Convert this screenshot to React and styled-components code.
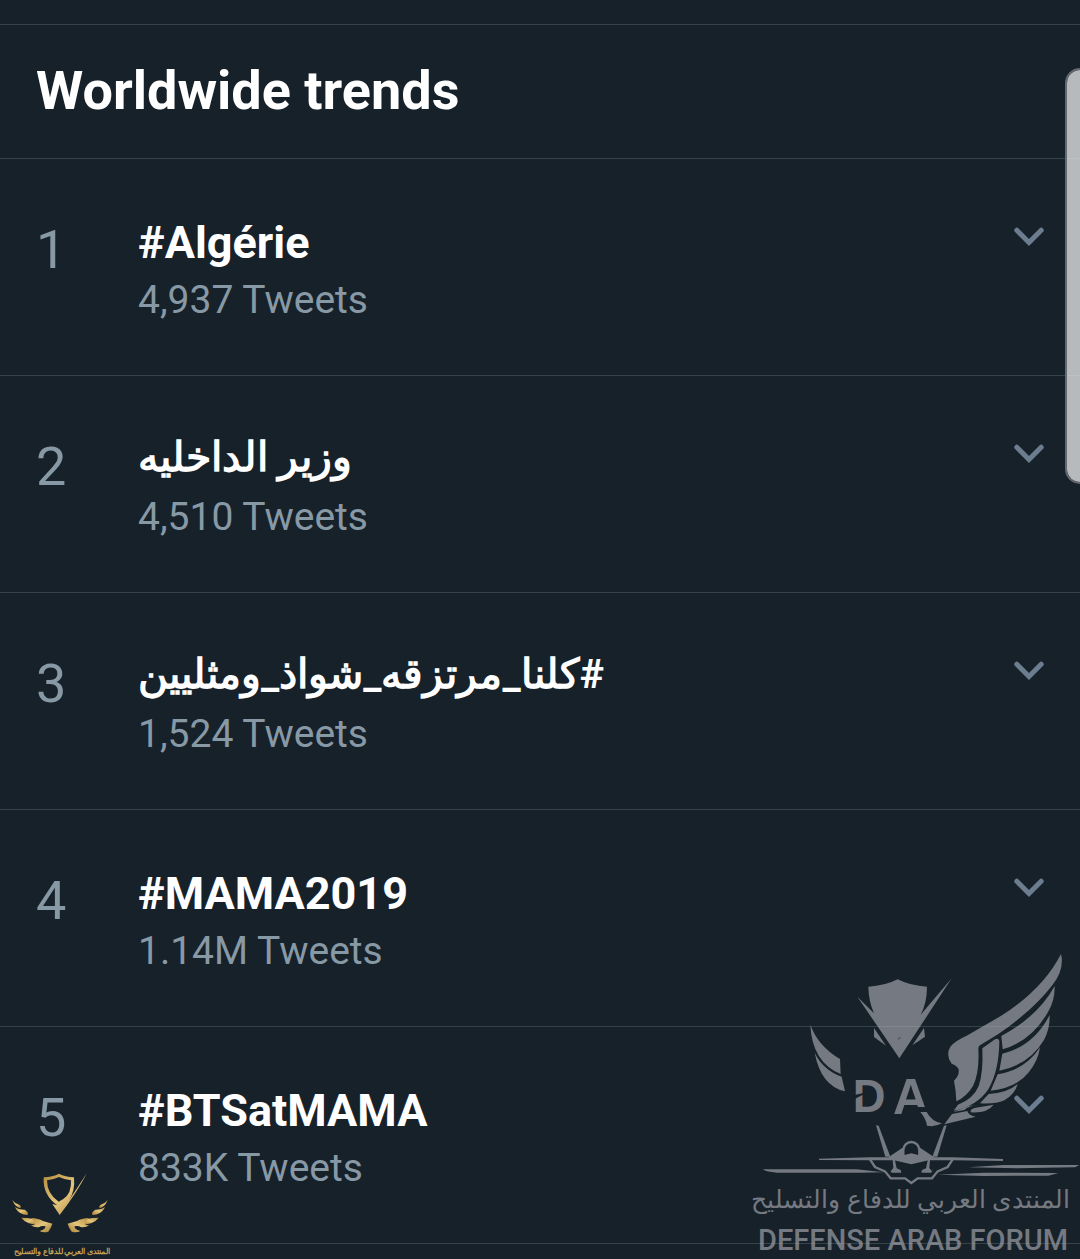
// App.jsx
import React from "react";
import styled, { createGlobalStyle } from "styled-components";

const GlobalStyle = createGlobalStyle`
    * {
        box-sizing: border-box;
    }
    body {
        margin: 0;
        background: #17212a;
        font-family: Roboto, sans-serif;
    }
`;

const Page = styled.main`
    position: relative;
    min-height: 100vh;
    padding-top: 24px;
    overflow: hidden;
    background: #17212a;
`;

const Header = styled.header`
    padding: 34px 36px 35px;
    border-top: 1px solid #34424a;
    border-bottom: 1px solid #34424a;
`;

const Heading = styled.h1`
    margin: 0;
    color: white;
    font-size: 54px;
    font-weight: 700;
    line-height: 64px;
`;

const TrendList = styled.ol`
    margin: 0;
    padding: 0;
    list-style: none;
`;

const TrendRow = styled.li`
    display: grid;
    grid-template-columns: 102px 1fr auto;
    align-items: start;
    padding: 56px 36px 51px;
    border-bottom: 1px solid #34424a;
`;

const Rank = styled.span`
    padding-top: 3px;
    color: #8899a6;
    font-size: 54px;
    line-height: 64px;
`;

const TrendBody = styled.div`
    display: flex;
    flex-direction: column;
    gap: 5px;
    min-width: 0;
`;

const TrendName = styled.h2`
    margin: 0;
    min-height: 56px;
    color: white;
    font-size: ${({ $arabic }) => ($arabic ? "41px" : "45px")};
    font-weight: 700;
    line-height: ${({ $arabic }) => ($arabic ? "50px" : "56px")};
    text-align: left;
`;

const TweetCount = styled.p`
    margin: 0;
    color: #8899a6;
    font-size: 39px;
    line-height: 48px;
`;

const MenuButton = styled.button`
    display: flex;
    margin: 12px 0 0;
    padding: 0;
    border: 0;
    background: transparent;
    color: #6b7d8e;
    cursor: pointer;
`;

const ScrollThumb = styled.div`
    position: absolute;
    top: 68px;
    right: 0;
    width: 15px;
    height: 416px;
    border: 2px solid #64696f;
    border-right: 0;
    border-radius: 15px 0 0 15px;
    background: rgba(222, 225, 226, 0.8);
    background-clip: padding-box;
`;

const ForumMark = styled.div`
    position: absolute;
    right: 0;
    bottom: 0;
    width: 330px;
    padding-bottom: 2px;
    color: #b4b4bb;
    opacity: 0.6;
    pointer-events: none;
`;

const ForumArabic = styled.p`
    margin: 0 0 8px;
    padding-right: 10px;
    font-size: 25px;
    line-height: 30px;
    white-space: nowrap;
`;

const ForumName = styled.p`
    margin: 0;
    padding-left: 8px;
    font-size: 29px;
    font-weight: 500;
    line-height: 34px;
    white-space: nowrap;
`;

const CornerMark = styled.div`
    position: absolute;
    left: 0;
    bottom: 0;
    width: 124px;
    pointer-events: none;
`;

const CornerText = styled.p`
    margin: 0;
    color: #c3a055;
    font-size: 8px;
    font-weight: 700;
    line-height: 14px;
    text-align: center;
    white-space: nowrap;
`;

const Art = styled.svg`
    display: block;
`;

const trends = [
    { rank: 1, name: "#Algérie", count: "4,937 Tweets" },
    { rank: 2, name: "وزير الداخليه", count: "4,510 Tweets", arabic: true },
    { rank: 3, name: "#كلنا_مرتزقه_شواذ_ومثليين", count: "1,524 Tweets", arabic: true },
    { rank: 4, name: "#MAMA2019", count: "1.14M Tweets" },
    { rank: 5, name: "#BTSatMAMA", count: "833K Tweets" },
];

const Trend = ({ trend }) => (
    <TrendRow>
        <Rank>{trend.rank}</Rank>
        <TrendBody>
            <TrendName $arabic={trend.arabic} dir={trend.arabic ? "rtl" : "ltr"}>{trend.name}</TrendName>
            <TweetCount>{trend.count}</TweetCount>
        </TrendBody>
        <MenuButton type="button" aria-label="Options">
            <Art width="30" height="20" viewBox="0 0 30 20" fill="none" stroke="currentColor" strokeWidth="5" strokeLinecap="round">
                <path d="M2.8 3.2 15 15.4 27.2 3.2" />
            </Art>
        </MenuButton>
    </TrendRow>
);

const ForumEmblem = () => (
    <Art width="330" height="245" viewBox="0 0 990 735" fill="currentColor">
        {/* shield with the blade running through it */}
        <path d="M355 140Q404 138 443 118Q482 138 531 140Q531 188 512 224L605 115L448 355L322 170L372 220Q356 184 355 140Z" />
        <path d="M372 264V291L408 317Z" />
        <path d="M522 264L525 290L487 316Z" />
        <path d="M443 300L454 291L447 294Z" fill="#17212a" />
        {/* left wing */}
        <path d="M181 254Q204 318 270 357L272 402Q186 366 181 254Z" />
        <path d="M194 338Q219 390 275 410L285 454Q213 438 194 338Z" />
        {/* right wing */}
        <path d="M933 42Q944 88 908 134Q852 208 744 283L690 316Q685 318 685 326Q689 398 669 438Q650 470 619 484Q618 452 612 422Q628 408 626 388Q620 376 605 371Q586 346 601 320Q614 303 650 287L756 226Q880 146 933 42Z" />
        <path d="M697 325L735 298Q747 292 748 304Q747 392 716 446Q682 498 611 512L624 494Q671 476 686 438Q700 398 697 325Z" />
        <path d="M914 138Q915 182 894 216Q846 302 758 328L754 288Q865 228 914 138Z" />
        <path d="M899 225Q900 266 882 300Q838 374 748 392L757 341Q850 319 899 225Z" />
        <path d="M870 322Q865 361 837 396Q800 444 722 452L743 403Q826 390 870 322Z" />
        <path d="M803 432Q794 464 763 481Q736 493 690 490L716 462Q770 460 803 432Z" />
        <path d="M731 494Q712 520 662 517Q659 507 677 503L731 494Z" />
        <path d="M690 494Q655 496 643 510L610 516L655 498Z" />
        <path d="M606 522L652 513Q654 525 677 530L583 553Z" />
        {/* initials */}
        <text x="308" y="516" fontFamily="Liberation Sans, sans-serif" fontWeight="700" fontSize="136">D</text>
        <text x="429" y="521" fontFamily="Liberation Sans, sans-serif" fontWeight="700" fontSize="148">A</text>
        <path d="M314 478Q334 463 368 457L340 459L314 465Z" fill="#17212a" />
        <path d="M502 501H540V524H494Z" fill="#17212a" />
        <path d="M511 516H530Q545 545 576 550Q554 562 531 557Q528 536 511 516Z" />
        {/* jet */}
        <path d="M378 556L386 557L421 650H406Z" />
        <path d="M590 556L582 557L547 650H562Z" />
        <path d="M207 656L360 652H415L460 622V646L484 640L508 646V622L553 652H608L759 657V663L608 661H536L484 673L432 661H360L207 660Z" />
        <path d="M460 648V630A24 24 0 0 1 508 630V648" fill="none" stroke="currentColor" strokeWidth="7" />
        <path d="M360 658L375 681L405 694L422 715H465L484 729L503 715H546L563 694L593 681L608 658" fill="none" stroke="currentColor" strokeWidth="7" />
        <path d="M410 678L425 698H454L452 690L440 685L434 656L428 660L430 684L422 694Z" />
        <path d="M558 678L543 698H514L516 690L528 685L534 656L540 660L538 684L546 694Z" />
        <path d="M38 688H320L400 697L330 698H80Q50 696 38 688Z" />
        <path d="M655 682L760 675L988 675L975 682L800 685Z" />
        <path d="M563 704L700 698L925 699L895 707L700 708Z" />
    </Art>
);

const CornerEmblem = () => (
    <Art width="124" height="86" viewBox="0 0 372 258">
        <defs>
            <linearGradient id="gold" x1="0" y1="0" x2="1" y2="1">
                <stop offset="0" stopColor="#b58b3c" />
                <stop offset="0.5" stopColor="#e3c67c" />
                <stop offset="1" stopColor="#a87d35" />
            </linearGradient>
        </defs>
        <g fill="url(#gold)">
            <path fillRule="evenodd" d="M131 55Q158 54 177 44Q196 54 222 55Q226 96 207 124L261 42Q230 102 179 168L157 135L172 139Q128 109 131 55ZM141 64Q141 105 176 128L190 120Q215 104 213 64Q194 62 177 54Q160 62 141 64Z" />
            <g id="cornerWing">
                <path d="M37 123Q44 133 58 137Q66 144 60 147Q44 143 37 123Z" />
                <path d="M44 144Q58 153 74 152Q88 161 82 168Q58 168 44 144Z" />
                <path d="M64 176Q83 176 96 179Q111 186 113 193Q101 198 87 193Q72 188 64 176Z" />
                <path d="M93 177Q116 178 129 186L157 194Q153 207 145 218Q130 222 119 216Q139 210 136 202Q124 200 118 204Q105 207 92 199Q118 198 93 177Z" />
            </g>
            <use href="#cornerWing" transform="translate(360 0) scale(-1 1)" />
        </g>
    </Art>
);

const App = () => {
    return (
        <>
            <GlobalStyle />
            <Page>
                <Header>
                    <Heading>Worldwide trends</Heading>
                </Header>
                <TrendList>
                    {trends.map((trend) => (
                        <Trend key={trend.rank} trend={trend} />
                    ))}
                </TrendList>
                <ScrollThumb />
                <CornerMark>
                    <CornerEmblem />
                    <CornerText dir="rtl">المنتدى العربي للدفاع والتسليح</CornerText>
                </CornerMark>
                <ForumMark>
                    <ForumEmblem />
                    <ForumArabic dir="rtl">المنتدى العربي للدفاع والتسليح</ForumArabic>
                    <ForumName>DEFENSE ARAB FORUM</ForumName>
                </ForumMark>
            </Page>
        </>
    );
};

export default App;
